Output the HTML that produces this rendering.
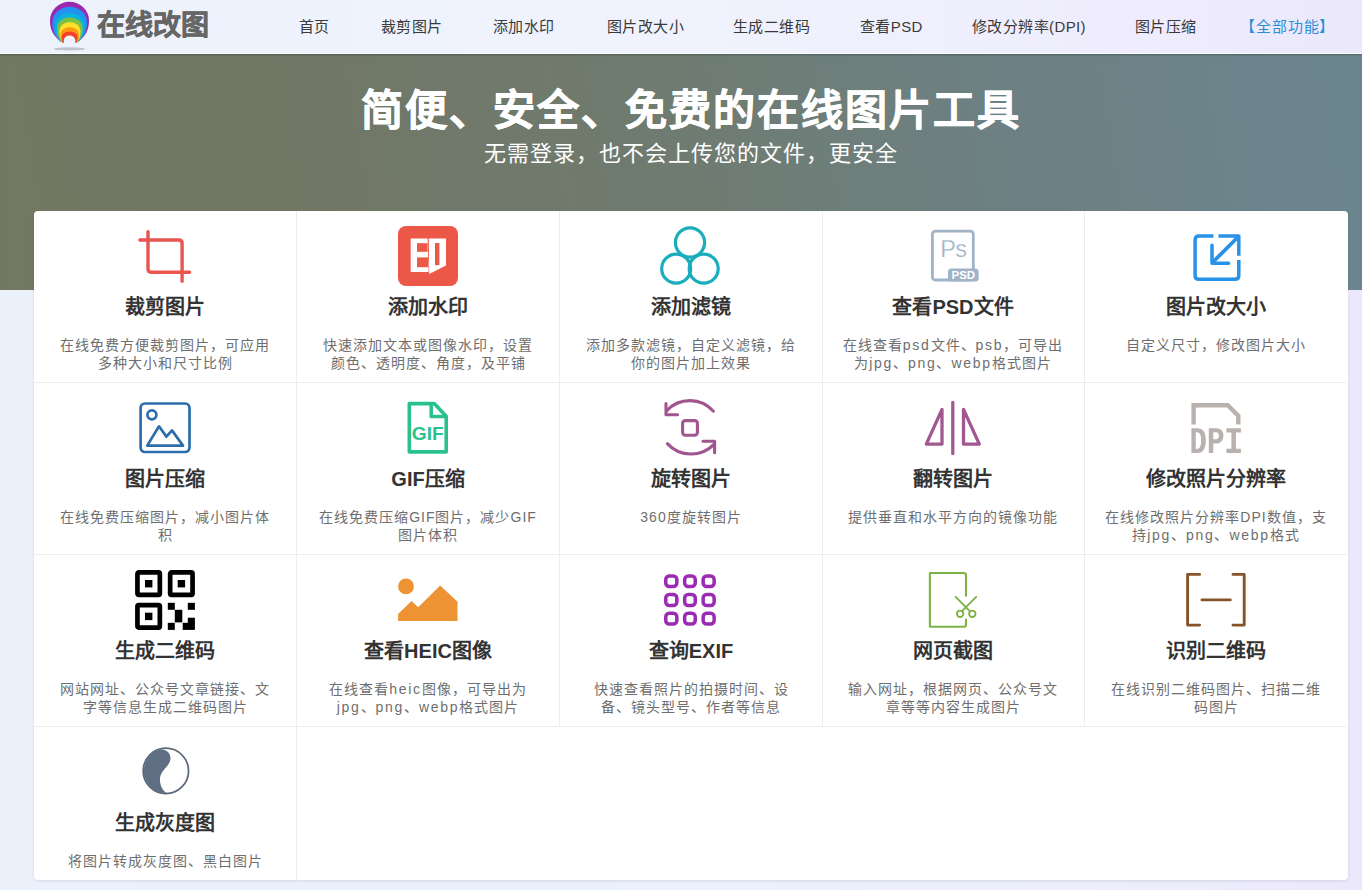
<!DOCTYPE html>
<html lang="zh-CN">
<head>
<meta charset="utf-8">
<title>在线改图</title>
<style>
*{margin:0;padding:0;box-sizing:border-box}
html,body{width:1362px;height:890px;overflow:hidden}
body{position:relative;font-family:"Liberation Sans",sans-serif;background:linear-gradient(90deg,#eaf1fb 0%,#ebf0fb 55%,#ecedfb 85%,#ece8fb 100%);}
#hdr{position:absolute;left:0;top:0;width:1362px;height:54px;background:linear-gradient(90deg,#ecf2fc 0%,#f0f3fd 45%,#efeefd 75%,#ece8fc 100%);border-bottom:1px solid #fbfdff}
#hero{position:absolute;left:0;top:54px;width:1362px;height:236px;background:linear-gradient(80deg,#737862 0%,#717765 22%,#6f7b6f 48%,#6d8082 72%,#6c8690 100%);box-shadow:inset 0 2px 2px -1px rgba(40,50,50,.45)}
.logo-i{position:absolute;left:45px;top:0}
.logo-t{position:absolute;left:97px;top:6px;font-size:28px;font-weight:bold;color:#666;line-height:40px;white-space:nowrap;-webkit-text-stroke:0.6px #666}
.nav{position:absolute;top:15px;font-size:15px;letter-spacing:.4px;color:#3a3a3a;line-height:24px;white-space:nowrap}
.nav.all{color:#2b8fd6}
.h1{position:absolute;left:0;width:1381px;top:81px;text-align:center;color:#fff;font-size:42px;font-weight:bold;letter-spacing:2px;line-height:60px;white-space:nowrap;-webkit-text-stroke:0.7px #fff}
.h2{position:absolute;left:0;width:1381px;top:139px;text-align:center;color:#fff;font-size:22px;letter-spacing:1px;line-height:30px;white-space:nowrap}
#box{position:absolute;left:34px;top:211px;width:1314px;height:669px;background:#fff;border-radius:4px;box-shadow:0 1px 3px rgba(60,70,90,.14)}
.cell{position:absolute;width:263px;height:172px;border-right:1px solid #ededed;border-bottom:1px solid #ededed;text-align:center}
.cell .ic{position:absolute;left:101px;top:15px;width:60px;height:60px}
.cell .t{position:absolute;left:0;right:0;top:82px;font-size:20px;font-weight:bold;color:#333;line-height:28px;white-space:nowrap}
.cell .d{position:absolute;left:20px;right:20px;top:125px;font-size:14px;letter-spacing:1px;color:#6e6e6e;line-height:18px}
.cell .l{letter-spacing:1.7px}
.cell svg{overflow:visible;display:block}
</style>
</head>
<body>
<div id="hdr"></div>
<div id="hero"></div>
<svg class="logo-i" width="50" height="54" viewBox="0 0 50 54"><path fill="#9c27b0" d="M17.8,42.8 C7.82,36.56 5.00,28.97 5,20.5 A19.50,18.65 0 0 1 44,20.5 C44.00,28.97 41.23,36.56 31.4,42.8 Z"/><path fill="#2291ef" d="M17.8,42.8 C9.61,37.12 7.30,30.21 7.3,22.5 A17.40,15.80 0 0 1 42.1,22.5 C42.10,30.21 39.75,37.12 31.4,42.8 Z"/><path fill="#0bb3dc" d="M17.8,42.8 C11.56,37.82 9.80,31.76 9.8,25 A15.05,11.80 0 0 1 39.9,25 C39.90,31.76 38.03,37.82 31.4,42.8 Z"/><path fill="#7cc142" d="M17.8,42.8 C13.28,38.66 12.00,33.62 12,28 A12.80,10.50 0 0 1 37.6,28 C37.60,33.62 36.24,38.66 31.4,42.8 Z"/><path fill="#fde02a" d="M17.8,42.8 C15.07,39.44 14.30,35.36 14.3,30.8 A10.60,8.80 0 0 1 35.5,30.8 C35.50,35.36 34.60,39.44 31.4,42.8 Z"/><path fill="#fb9a12" d="M17.8,42.8 C16.01,40.28 15.50,37.22 15.5,33.8 A9.25,6.60 0 0 1 34,33.8 C34.00,37.22 33.43,40.28 31.4,42.8 Z"/><path fill="#f2402a" d="M17.8,42.8 C16.94,41.12 16.70,39.08 16.7,36.8 A7.90,5.30 0 0 1 32.5,36.8 C32.50,39.08 32.26,41.12 31.4,42.8 Z"/><path fill="#eef2fb" d="M18.8,45 V40 A5.75,4.4 0 0 1 30.3,40 V45 Z"/><ellipse cx="24.5" cy="48.9" rx="15.5" ry="1.7" fill="#c0c4cf"/></svg>
<div class="logo-t">在线改图</div>
<div class="nav" style="left:299px">首页</div>
<div class="nav" style="left:381px">裁剪图片</div>
<div class="nav" style="left:493px">添加水印</div>
<div class="nav" style="left:607px">图片改大小</div>
<div class="nav" style="left:733px">生成二维码</div>
<div class="nav" style="left:860px">查看PSD</div>
<div class="nav" style="left:972px">修改分辨率(DPI)</div>
<div class="nav" style="left:1135px">图片压缩</div>
<div class="nav all" style="left:1240px;letter-spacing:.9px">【全部功能】</div>
<div class="h1">简便、安全、免费的在线图片工具</div>
<div class="h2">无需登录，也不会上传您的文件，更安全</div>
<div id="box">
<!--CELLS-->
<div class="cell" style="left:0px;top:0px;height:172px;"><div class="ic"><svg width="60" height="60" viewBox="0 0 60 60"><g fill="none" stroke="#e8564f" stroke-width="3.4" stroke-linecap="round"><path d="M13,5.6 V43 Q13,46.2 16.2,46.2 H54.6"/><path d="M4.8,14 H43.8 Q47.1,14 47.1,17.2 V55.3"/></g></svg></div><div class="t">裁剪图片</div><div class="d">在线免费方便裁剪图片，可应用<br>多种大小和尺寸比例</div></div>
<div class="cell" style="left:263px;top:0px;height:172px;"><div class="ic"><svg width="60" height="60" viewBox="0 0 60 60"><rect x="0" y="0" width="60" height="60" rx="8" fill="#ec5847"/><path fill="#fff" d="M12.7,12.5 H29.6 L30.6,46 H12.7 Z"/><path fill="#fff" d="M30.8,12.5 H48 V39.5 L31.2,48 Z"/><g fill="#ec5847"><rect x="19" y="17.2" width="10.6" height="8.6"/><rect x="19" y="31.4" width="11" height="9.8"/><rect x="37" y="17" width="4.4" height="22.2"/></g></svg></div><div class="t">添加水印</div><div class="d">快速添加文本或图像水印，设置<br>颜色、透明度、角度，及平铺</div></div>
<div class="cell" style="left:526px;top:0px;height:172px;"><div class="ic"><svg width="60" height="60" viewBox="0 0 60 60"><g fill="none" stroke="#1aaebc" stroke-width="3.2"><circle cx="29" cy="16.5" r="14.6"/><circle cx="15.2" cy="42.7" r="14.5"/><circle cx="42.7" cy="42.7" r="14.5"/></g></svg></div><div class="t">添加滤镜</div><div class="d">添加多款滤镜，自定义滤镜，给<br>你的图片加上效果</div></div>
<div class="cell" style="left:788px;top:0px;height:172px;"><div class="ic"><svg width="60" height="60" viewBox="0 0 60 60"><rect x="9.4" y="5.2" width="40.9" height="48.8" rx="3" fill="none" stroke="#a1b3c7" stroke-width="2.8"/><text x="30.3" y="31.4" text-anchor="middle" font-family="Liberation Sans" font-size="23.5" fill="#a1b3c7" stroke="#fff" stroke-width="0.25" letter-spacing="-0.6">Ps</text><rect x="25" y="42.4" width="30.7" height="13" rx="3.5" fill="#a1b3c7"/><text x="40.3" y="53.4" text-anchor="middle" font-family="Liberation Sans" font-weight="bold" font-size="11.5" fill="#fff">PSD</text></svg></div><div class="t">查看PSD文件</div><div class="d">在线查看<span class="l">psd</span>文件、<span class="l">psb</span>，可导出<br>为<span class="l">jpg</span>、<span class="l">png</span>、<span class="l">webp</span>格式图片</div></div>
<div class="cell" style="left:1051px;top:0px;height:172px;border-right:none;width:262px;"><div class="ic"><svg width="60" height="60" viewBox="0 0 60 60"><g fill="none" stroke="#2892e8" stroke-width="3.5" stroke-linejoin="round"><path d="M27.4,10 H13 Q9.1,10 9.1,13.9 V49.4 Q9.1,53.3 13,53.3 H48.9 Q52.8,53.3 52.8,49.4 V34.1"/><path d="M32.5,10 H52.8 V29.8"/><path d="M52,11 L27,36" stroke-width="3.8"/><path d="M26,19.2 V37.3 H42.6" stroke-linecap="round"/></g></svg></div><div class="t">图片改大小</div><div class="d">自定义尺寸，修改图片大小</div></div>
<div class="cell" style="left:0px;top:172px;height:172px;"><div class="ic"><svg width="60" height="60" viewBox="0 0 60 60"><g fill="none" stroke="#2c6eab" stroke-width="2.7" stroke-linejoin="round"><rect x="5.6" y="5.5" width="48.9" height="48.5" rx="4.5"/><circle cx="16.9" cy="16.8" r="4.5"/><path d="M12.2,47.6 L24,28.3 L31.4,38.6 L37,32.4 L48,47.6 Z"/></g></svg></div><div class="t">图片压缩</div><div class="d">在线免费压缩图片，减小图片体<br>积</div></div>
<div class="cell" style="left:263px;top:172px;height:172px;"><div class="ic"><svg width="60" height="60" viewBox="0 0 60 60"><g fill="none" stroke="#2bc18e" stroke-width="3.6" stroke-linejoin="round"><path d="M11.3,5.6 H36.3 L48.2,18.2 V53.9 H11.3 Z"/><path d="M33.2,5.6 V18.5 H48.2"/></g><text x="29.8" y="42.4" text-anchor="middle" font-family="Liberation Sans" font-weight="bold" font-size="19.2" fill="#2bc18e">GIF</text></svg></div><div class="t">GIF压缩</div><div class="d">在线免费压缩GIF图片，减少GIF<br>图片体积</div></div>
<div class="cell" style="left:526px;top:172px;height:172px;"><div class="ic"><svg width="60" height="60" viewBox="0 0 60 60"><g fill="none" stroke="#a1568f" stroke-width="3.1" stroke-linecap="round" stroke-linejoin="round"><path d="M52.4,13.2 A31.5,31.5 0 0 0 5.8,12.6"/><path d="M5,5.6 V16.8 H16.6"/><path d="M6.4,45.6 A32,32 0 0 0 53,46.4"/><path d="M42,43.3 H53.6 V54.8"/><rect x="21.6" y="22.6" width="14.8" height="14.6" rx="2.6"/></g></svg></div><div class="t">旋转图片</div><div class="d">360度旋转图片</div></div>
<div class="cell" style="left:788px;top:172px;height:172px;"><div class="ic"><svg width="60" height="60" viewBox="0 0 60 60"><g fill="none" stroke="#a0588e" stroke-width="3.3" stroke-linecap="round" stroke-linejoin="round"><path d="M29.8,4.4 V55.6"/><path d="M19,11.4 L3.3,46.1 H19 Z"/><path d="M40.5,11.4 L56.3,46.1 H40.5 Z"/></g></svg></div><div class="t">翻转图片</div><div class="d">提供垂直和水平方向的镜像功能</div></div>
<div class="cell" style="left:1051px;top:172px;height:172px;border-right:none;width:262px;"><div class="ic"><svg width="60" height="60" viewBox="0 0 60 60"><path fill="none" stroke="#b8b1ae" stroke-width="4.4" stroke-linejoin="miter" d="M7.6,26.6 V7.2 H41.8 L52.3,17.8 V26.6"/><g fill="#b8b1ae"><path d="M5.4,30.2 H11.4 Q19.8,30.2 19.8,42.6 Q19.8,55 11.4,55 H5.4 Z M9.8,34.3 V50.9 H11 Q15.2,50.9 15.2,42.6 Q15.2,34.3 11 34.3 Z" fill-rule="evenodd"/><path d="M22.8,30.2 H30.4 Q37.4,30.2 37.4,37.8 Q37.4,45.4 30.4,45.4 H27.3 V55 H22.8 Z M27.3,34.3 V41.3 H30 Q32.8,41.3 32.8,37.8 Q32.8,34.3 30,34.3 Z" fill-rule="evenodd"/><path d="M40.4,30.2 H54.9 V34.4 H49.9 V50.8 H54.9 V55 H40.4 V50.8 H45.4 V34.4 H40.4 Z"/></g></svg></div><div class="t">修改照片分辨率</div><div class="d">在线修改照片分辨率DPI数值，支<br>持<span class="l">jpg</span>、<span class="l">png</span>、<span class="l">webp</span>格式</div></div>
<div class="cell" style="left:0px;top:344px;height:172px;"><div class="ic"><svg width="60" height="60" viewBox="0 0 60 60"><g fill="none" stroke="#000" stroke-width="4.7"><rect x="2.45" y="2.45" width="22.4" height="22.4" rx="1.3"/><rect x="35.15" y="2.45" width="22.4" height="22.4" rx="1.3"/><rect x="2.45" y="35.15" width="22.4" height="22.4" rx="1.3"/></g><g fill="#000"><rect x="10" y="10" width="7.4" height="7.4"/><rect x="42.7" y="10" width="7.4" height="7.4"/><rect x="10" y="42.7" width="7.4" height="7.4"/><rect x="32.8" y="32.8" width="7" height="7"/><rect x="52.8" y="32.8" width="7.1" height="7"/><rect x="39.8" y="39.8" width="7.5" height="12.6"/><rect x="32.8" y="52.8" width="7" height="7.1"/><rect x="47.7" y="52.8" width="12.2" height="7.1"/><rect x="52.8" y="47.7" width="7.1" height="6"/></g></svg></div><div class="t">生成二维码</div><div class="d">网站网址、公众号文章链接、文<br>字等信息生成二维码图片</div></div>
<div class="cell" style="left:263px;top:344px;height:172px;"><div class="ic"><svg width="60" height="60" viewBox="0 0 60 60"><g fill="#ee9333"><circle cx="8" cy="16.4" r="7.9"/><path d="M0.1,43.9 L13.5,30.9 L20.2,37.2 L42.2,15.6 L59.5,31.7 V51 H0.1 Z"/></g></svg></div><div class="t">查看HEIC图像</div><div class="d">在线查看<span class="l">heic</span>图像，可导出为<br><span class="l">jpg</span>、<span class="l">png</span>、<span class="l">webp</span>格式图片</div></div>
<div class="cell" style="left:526px;top:344px;height:172px;"><div class="ic"><svg width="60" height="60" viewBox="0 0 60 60"><g fill="none" stroke="#9a2bb3" stroke-width="3.5"><rect x="4.75" y="5.95" width="11.1" height="10.6" rx="3.5"/><rect x="23.65" y="5.95" width="10.6" height="10.6" rx="3.5"/><rect x="42.15" y="5.95" width="11" height="10.6" rx="3.5"/><rect x="4.75" y="24.45" width="11.1" height="11" rx="3.5"/><rect x="23.65" y="24.45" width="10.6" height="11" rx="3.5"/><rect x="42.15" y="24.45" width="11" height="11" rx="3.5"/><rect x="4.75" y="43.25" width="11.1" height="10.7" rx="3.5"/><rect x="23.65" y="43.25" width="10.6" height="10.7" rx="3.5"/><rect x="42.15" y="43.25" width="11" height="10.7" rx="3.5"/></g></svg></div><div class="t">查询EXIF</div><div class="d">快速查看照片的拍摄时间、设<br>备、镜头型号、作者等信息</div></div>
<div class="cell" style="left:788px;top:344px;height:172px;"><div class="ic"><svg width="60" height="60" viewBox="0 0 60 60"><g fill="none" stroke="#7db345" stroke-linecap="round" stroke-linejoin="round"><path stroke-width="2.1" d="M43,25.8 V5.4 Q43,3 40.6,3 H6.9 V56.8 H40.6 Q43,56.8 43,54.4 V49.6"/><g stroke-width="1.9"><path d="M32.6,26.9 L46.3,40.6"/><path d="M53.2,26.9 L39.5,40.6"/><circle cx="37.1" cy="43.8" r="3.2"/><circle cx="49.3" cy="43.8" r="3.2"/></g></g></svg></div><div class="t">网页截图</div><div class="d">输入网址，根据网页、公众号文<br>章等等内容生成图片</div></div>
<div class="cell" style="left:1051px;top:344px;height:172px;border-right:none;width:262px;"><div class="ic"><svg width="60" height="60" viewBox="0 0 60 60"><g fill="none" stroke="#87542a" stroke-width="2.9" stroke-linecap="round" stroke-linejoin="round"><path d="M13.6,4.4 H1.6 V55.1 H13.6"/><path d="M47,4.4 H58.2 V55.1 H47"/><path d="M16,29.9 H44.3"/></g></svg></div><div class="t">识别二维码</div><div class="d">在线识别二维码图片、扫描二维<br>码图片</div></div>
<div class="cell" style="left:0px;top:516px;height:156px;border-bottom:none;"><div class="ic"><svg width="60" height="60" viewBox="0 0 60 60"><circle cx="30.85" cy="28.9" r="22.7" fill="none" stroke="#5c6878" stroke-width="1.7"/><path fill="#5f6e83" d="M25.3,7.6 C31.5,6.5 37,12 35.1,18.8 C33.6,24.5 26,28.5 25,35.8 C24.4,42 27.2,48.5 31.7,50.9 A22,22 0 0 1 25.3,7.6 Z"/></svg></div><div class="t">生成灰度图</div><div class="d">将图片转成灰度图、黑白图片</div></div>
<!--/CELLS-->
</div>
</body>
</html>
